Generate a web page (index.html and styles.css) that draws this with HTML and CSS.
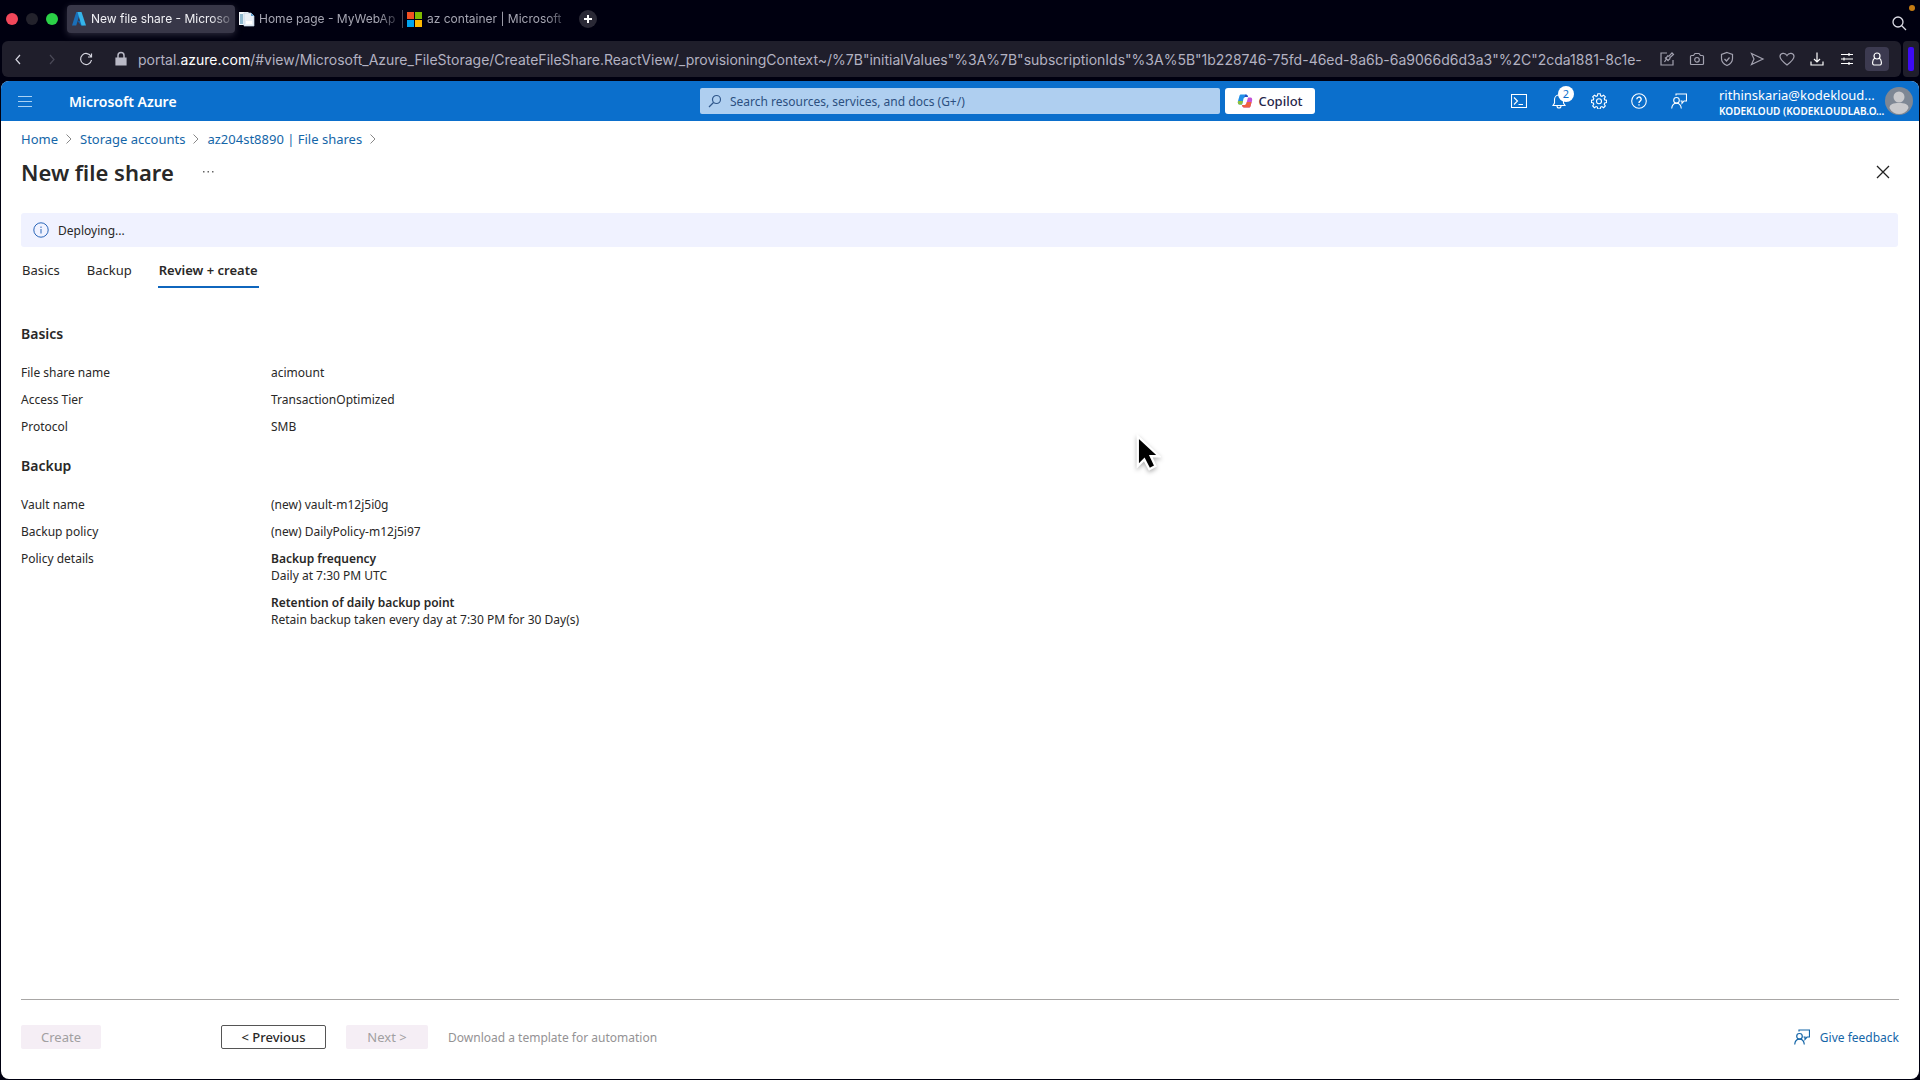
FILE: index.html
```html
<!DOCTYPE html>
<html lang="en">
<head>
  <meta charset="UTF-8" />
  <title>New file share - Microsoft Azure</title>
  <link rel="stylesheet" href="styles.css">
</head>
<body>
  <!-- browser chrome -->
  <div class="tab-strip">
    <div class="window-dots">
      <span class="dot dot-red"></span>
      <span class="dot dot-grey"></span>
      <span class="dot dot-green"></span>
    </div>
    <div class="tabs">
      <div class="tab active">
        <svg class="favicon" viewBox="0 0 16 16">
          <path d="M5.3 1h4.200L5.200 14.600H1z" fill="#1a6fb8"/>
          <path d="M6.300 9.800h5.200l1.400 4.800H10z" fill="#0f5ea8"/>
          <path d="M6.500 1h4l4.500 13.600h-4.500z" fill="#35b5ea"/>
        </svg>
        <span class="tab-title">New file share - Microso</span>
      </div>
      <div class="tab">
        <svg class="favicon" viewBox="0 0 16 16">
          <path d="M0 1h9l1 1v12H0z" fill="#f4f8fb"/>
          <path d="M1 3h3v10H1z" fill="#8fb9cf"/>
          <path d="M5 2h7l3 3v10H5z" fill="#e9eff6" stroke="#b9cfe2" stroke-width=".7"/>
          <path d="M12 2v3h3z" fill="#5e9fd0"/>
          <path d="M7 10h6v3H7z" fill="#fff"/>
        </svg>
        <span class="tab-title">Home page - MyWebAp</span>
      </div>
      <div class="tab divided">
        <svg class="favicon" viewBox="0 0 16 16">
          <path d="M0 1h7v7H0z" fill="#f25022"/>
          <path d="M8 1h7v7H8z" fill="#7fba00"/>
          <path d="M0 9h7v7H0z" fill="#00a4ef"/>
          <path d="M8 9h7v7H8z" fill="#ffb900"/>
        </svg>
        <span class="tab-title">az container | Microsoft</span>
      </div>
    </div>
    <button class="new-tab" aria-label="New tab">
      <svg width="18" height="18" viewBox="0 0 18 18"><path d="M9 5v8M5 9h8" stroke="#fff" stroke-width="2"/></svg>
    </button>
    <button class="tab-search" aria-label="Search tabs">
      <svg width="18" height="18" viewBox="0 0 18 18" fill="none" stroke="#dcdce6" stroke-width="1.3"><circle cx="8" cy="8" r="5"/><path d="M11.5 11.5l4.5 4.5"/></svg>
    </button>
    <span class="rec-dot"></span>
  </div>

  <div class="address-row">
    <div class="address-bar">
      <div class="nav-buttons">
        <button aria-label="Back"><svg class="ico" viewBox="0 0 16 16"><path d="M10 4L6 8.500l4 4.500"/></svg></button>
        <button aria-label="Forward" disabled><svg class="ico" viewBox="0 0 16 16"><path d="M6 4l4 4.500L6 13"/></svg></button>
        <button aria-label="Reload"><svg class="ico" viewBox="0 0 16 16"><path d="M13 5.500A5.500 5.500 0 1 0 13.500 9M13.500 2.500v3.500H10"/></svg></button>
        <svg class="ico lock" viewBox="0 0 16 16"><path d="M3 7h10v7H3z" fill="#b9b9c6"/><path d="M5 7V4.500a3 3 0 0 1 6 0V7" stroke-width="1.500"/></svg>
      </div>
      <div class="url">portal.<span class="url-host">azure.com</span>/#view/Microsoft_Azure_FileStorage/CreateFileShare.ReactView/_provisioningContext~/%7B"initialValues"%3A%7B"subscriptionIds"%3A%5B"1b228746-75fd-46ed-8a6b-6a9066d6d3a3"%2C"2cda1881-8c1e-</div>
      <div class="tools">
        <button aria-label="Edit"><svg class="ico" viewBox="0 0 16 16"><path d="M8 2H2v12h12V9M5.500 11l1.500-2.500M6 6.500l3.500 3.500M7 7.500l1.500-2.500L10 5.200 13 1.800 14.500 3.500 11 6.500l-.2 1.500L9 9.200"/></svg></button>
        <button aria-label="Snapshot"><svg class="ico" viewBox="0 0 16 16"><path d="M2.500 4.500h2l1.500-2h4l1.500 2h2q1 0 1 1v7q0 1-1 1h-11q-1 0-1-1v-7q0-1 1-1z"/><circle cx="8" cy="8.800" r="2.300"/></svg></button>
        <button aria-label="Privacy"><svg class="ico" viewBox="0 0 16 16"><path d="M8 1.500l5.500 2v4c0 3-2 5.500-5.500 7-3.500-1.500-5.500-4-5.500-7v-4zM5.500 8l2 2 3-3.500"/></svg></button>
        <button aria-label="My Flow"><svg class="ico" viewBox="0 0 16 16"><path d="M2.500 2.500L14 8 2.500 13.500 5 8z"/></svg></button>
        <button aria-label="Favourite"><svg class="ico" viewBox="0 0 16 16"><path d="M8 14C3.500 10.500 1 8.500 1 5.500 1 2 6 1 8 4.500 10 1 15 2 15 5.500c0 3-2.500 5-7 8.500z"/></svg></button>
        <button class="bright" aria-label="Downloads"><svg class="ico" viewBox="0 0 16 16"><path d="M8 1.500v9M5 8l3 3 3-3M2 10.500V14h12v-3.500"/></svg></button>
        <button class="bright" aria-label="Easy setup"><svg class="ico" viewBox="0 0 16 16"><path d="M2 3.500h12M2 8h12M2 12.500h12M10 2v3M5 6.500v3M10 11v3"/></svg></button>
        <button class="bright profile" aria-label="Profile"><svg class="ico" viewBox="0 0 16 16"><circle cx="8" cy="5" r="3"/><path d="M5.800 7C3 9 3 14 5 14h6c2 0 2-5-.8-7"/></svg></button>
      </div>
    </div>
    <div class="side-toggle"><span></span></div>
  </div>

  <!-- portal -->
  <div class="portal">
    <header class="topbar">
      <button class="menu-btn" aria-label="Show portal menu">
        <svg width="16" height="16" viewBox="0 0 16 16"><path d="M1 3.500h14M1 8.500h14M1 13.500h14" stroke="#a9d2f5"/></svg>
      </button>
      <a class="brand" href="#">Microsoft Azure</a>
      <div class="top-center">
        <label class="search">
          <svg width="14" height="14" viewBox="0 0 14 14" fill="none" stroke="#31588c" stroke-width="1.200"><circle cx="8.500" cy="5.500" r="4"/><path d="M5.500 8.500L1 13"/></svg>
          <input type="text" placeholder="Search resources, services, and docs (G+/)" aria-label="Search">
        </label>
        <button class="copilot">
          <svg width="16" height="16" viewBox="0 0 16 16">
            <path d="M4 1.500h5c1.500 0 1.500 1 2 2.500H8.500C6.500 4 6.500 6 6 8l-1 3.500H2.500C1 11.500.5 10 1 8l1.300-4.500C2.700 2 3 1.500 4 1.500z" fill="#2390e8"/>
            <path d="M1 8c-.5 2 0 3.500 1.500 3.500H5L6 8z" fill="#8fc13a"/>
            <path d="M8.500 1.500c1.500 0 2 1 2.500 2.500H8.500c-1 0-1.400.5-1.800 1.500z" fill="#264bc0"/>
            <path d="M12 14.500H7c-1.500 0-1.500-1-2-2.500h2.500c2 0 2-2 2.500-4l1-3.500h2.500c1.500 0 2 1.500 1.500 3.500l-1.300 4.500c-.4 1.500-.7 2-1.700 2z" fill="#c252d6"/>
            <path d="M14.500 9l-.8 3.500c-.4 1.500-.7 2-1.700 2H7c-1.500 0-1.500-1-2-2.500h2.500c1.500 0 2-1.500 2.300-3z" fill="#f0603e"/>
          </svg>
          Copilot
        </button>
      </div>
      <div class="top-icons">
        <button aria-label="Cloud Shell"><svg class="top-ico" viewBox="0 0 16 16"><path d="M.5 1.500h15v13H.5zM3 4.500L6.500 8 3 11.500M7.500 11.500H12"/></svg></button>
        <button class="bell" aria-label="Notifications"><svg class="top-ico" viewBox="0 0 16 16"><path d="M2 12.500h12l-1.500-2.500V6.500a4.500 4.500 0 0 0-9 0V10zM6 13a2 2 0 0 0 4 0"/></svg><span class="badge">2</span></button>
        <button aria-label="Settings"><svg class="top-ico" viewBox="0 0 16 16"><path d="M6.800 .8h2.400l.4 2 1.300.5 1.700-1.100 1.700 1.700-1.100 1.700.5 1.300 1.900.3v2.400l-1.900.4-.5 1.300 1.100 1.700-1.700 1.700-1.700-1.100-1.300.5-.4 1.900H6.800l-.4-1.900-1.300-.5-1.700 1.100-1.700-1.700 1.100-1.700-.5-1.300-1.900-.4V7.200l1.900-.3.5-1.300-1.100-1.700 1.700-1.700 1.700 1.100 1.300-.5z"/><circle cx="8" cy="8.300" r="2.500"/></svg></button>
        <button aria-label="Help"><svg class="top-ico" viewBox="0 0 16 16"><circle cx="8" cy="8" r="7.300"/><path d="M5.800 6.300a2.200 2.200 0 1 1 3.300 1.900C8.200 8.700 8 9 8 10M8 11.300v1.200" stroke-width="1.400"/></svg></button>
        <button aria-label="Feedback"><svg class="top-ico" viewBox="0 0 16 16"><circle cx="5.500" cy="7.300" r="2.800"/><path d="M.7 15.500c.3-3.500 2.300-5.300 4.800-5.300s4.500 1.800 4.800 5.300M5 2.500V1h10.500v7H13l-2 2.300V8H9.500"/></svg></button>
      </div>
      <div class="account">
        <div class="account-text">
          <div class="account-mail">rithinskaria@kodekloud...</div>
          <div class="account-dir">KODEKLOUD (KODEKLOUDLAB.O...</div>
        </div>
        <svg class="avatar" viewBox="0 0 28 28">
          <circle cx="14" cy="14" r="14" fill="#7e8794"/>
          <circle cx="14" cy="10" r="5.500" fill="#c9c9cc"/>
          <path d="M4.500 21c0-4 4-5 9.500-5s9.500 1 9.500 5c-2 4-5.500 6-9.500 6s-7.500-2-9.500-6z" fill="#c9c9cc"/>
        </svg>
      </div>
    </header>

    <main class="blade">
      <nav class="breadcrumb">
        <a href="#">Home</a>
        <svg viewBox="0 0 8 12"><path d="M1.500 1.500L6 6l-4.500 4.500"/></svg>
        <a href="#">Storage accounts</a>
        <svg viewBox="0 0 8 12"><path d="M1.500 1.500L6 6l-4.500 4.500"/></svg>
        <a href="#">az204st8890 | File shares</a>
        <svg viewBox="0 0 8 12"><path d="M1.500 1.500L6 6l-4.500 4.500"/></svg>
      </nav>
      <div class="title-row">
        <h1>New file share</h1>
        <button class="more" aria-label="More"><svg width="12" height="4" viewBox="0 0 12 4" fill="#666"><path d="M1 1h1.500v1.500H1zM5.500 1H7v1.500H5.500zM10 1h1.500v1.500H10z"/></svg></button>
        <button class="close" aria-label="Close"><svg width="14" height="14" viewBox="0 0 14 14"><path d="M1 1l12 12M13 1L1 13" stroke="#222" stroke-width="1.300"/></svg></button>
      </div>

      <div class="info-bar" role="status">
        <svg width="16" height="16" viewBox="0 0 16 16" fill="none" stroke="#2b66b8"><circle cx="8" cy="8" r="7.200"/><path d="M8 7v4.500M8 4.500V6"/></svg>
        Deploying...
      </div>

      <div class="pivot" role="tablist">
        <button role="tab">Basics</button>
        <button role="tab">Backup</button>
        <button role="tab" class="selected" aria-selected="true">Review + create</button>
      </div>

      <section>
        <h2>Basics</h2>
        <dl>
          <dt>File share name</dt><dd>acimount</dd>
          <dt>Access Tier</dt><dd>TransactionOptimized</dd>
          <dt>Protocol</dt><dd>SMB</dd>
        </dl>
      </section>
      <section>
        <h2>Backup</h2>
        <dl>
          <dt>Vault name</dt><dd>(new) vault-m12j5i0g</dd>
          <dt>Backup policy</dt><dd>(new) DailyPolicy-m12j5i97</dd>
          <dt>Policy details</dt>
          <dd>
            <p><strong>Backup frequency</strong><br>Daily at 7:30 PM UTC</p>
            <p><strong>Retention of daily backup point</strong><br>Retain backup taken every day at 7:30 PM for 30 Day(s)</p>
          </dd>
        </dl>
      </section>

      <footer class="actions">
        <button class="btn btn-create" disabled>Create</button>
        <button class="btn btn-prev">&lt; Previous</button>
        <button class="btn btn-next" disabled>Next &gt;</button>
        <span class="template-link">Download a template for automation</span>
        <a class="feedback" href="#">
          <svg width="16" height="16" viewBox="0 0 16 16"><circle cx="5.500" cy="7.300" r="2.800"/><path d="M.7 15.500c.3-3.500 2.300-5.300 4.800-5.300s4.500 1.800 4.800 5.300M5 2.500V1h10.500v7H13l-2 2.300V8H9.500"/></svg>
          Give feedback
        </a>
      </footer>
    </main>
  </div>

  <svg class="cursor" viewBox="0 0 28 40">
    <path d="M3 2v32l7-7 5.500 10.500 6.500-3.500L17 23.500h9z" fill="#000" stroke="#fff" stroke-width="2.500"/>
  </svg>
</body>
</html>
```
FILE: styles.css
```css
* { box-sizing: border-box; }
body {
  margin: 0;
  height: 100vh;
  display: flex;
  flex-direction: column;
  background: #000010;
  font-family: "Noto Sans", sans-serif;
  font-size: 12px;
  color: #292827;
  overflow: hidden;
}
button {
  font: inherit;
  color: inherit;
  background: none;
  border: none;
  padding: 0;
  display: flex;
  align-items: center;
  justify-content: center;
}
a { color: #1566a8; text-decoration: none; }
h1, h2, p, dl, dd { margin: 0; }

/* tab strip */
.tab-strip {
  position: relative;
  display: flex;
  align-items: center;
  height: 41px;
  padding: 0 12px 4px 6px;
  font-family: Inter, sans-serif;
  color: #a5a5b2;
}
.window-dots { display: flex; gap: 8px; width: 61px; }
.dot { width: 12px; height: 12px; border-radius: 50%; }
.dot-red { background: #f2475a; }
.dot-grey { background: #23222c; }
.dot-green { background: #2bd147; }
.tabs { display: flex; }
.tab {
  display: flex;
  align-items: center;
  gap: 4px;
  width: 168px;
  height: 28px;
  padding: 0 2px 0 4px;
  border-radius: 4px;
}
.tab.active {
  background: #383748;
  color: #f1f1f5;
  box-shadow: 0 2px 6px #2a293a;
}
.tab.divided { position: relative; }
.tab.divided::before {
  content: "";
  position: absolute;
  left: -1px;
  top: 5px;
  width: 1px;
  height: 18px;
  background: #4a4957;
}
.favicon { width: 16px; height: 16px; flex: none; }
.tab-title {
  flex: 1;
  white-space: nowrap;
  -webkit-mask-image: linear-gradient(90deg, #000 84%, transparent 102%);
  mask-image: linear-gradient(90deg, #000 84%, transparent 102%);
}
.new-tab {
  width: 18px;
  height: 18px;
  margin-left: 8px;
  border-radius: 50%;
  background: #2a2936;
}
.tab-search { margin-left: auto; padding-top: 8px; }
.rec-dot {
  position: absolute;
  top: 5px;
  right: 5px;
  width: 6px;
  height: 6px;
  border-radius: 50%;
  background: #c47c14;
}

/* address bar */
.address-row { display: flex; gap: 2px; padding: 0 1px 0 2px; height: 36px; }
.address-bar {
  flex: 1;
  min-width: 0;
  display: flex;
  align-items: center;
  padding: 0 12px 0 6px;
  border-radius: 6px;
  background: #1f1e2b;
  color: #d5d5df;
}
.nav-buttons { display: flex; align-items: center; gap: 14px; width: 130px; }
.nav-buttons button { width: 20px; height: 20px; }
.nav-buttons button:disabled { color: #4a4957; }
.ico {
  width: 16px;
  height: 16px;
  fill: none;
  stroke: currentColor;
  stroke-width: 1.2;
}
.lock { color: #b9b9c6; margin-left: 3px; }
.url {
  flex: 1;
  overflow: hidden;
  white-space: nowrap;
  font: 14px Inter, sans-serif;
  color: #b3b2c2;
}
.url-host { color: #fff; }
.tools { display: flex; align-items: center; gap: 6px; color: #a3a2b0; }
.tools button { width: 24px; height: 24px; }
.tools .bright { color: #fff; }
.tools .profile { background: #3c3a50; border-radius: 4px; }
.side-toggle {
  width: 16px;
  padding: 6px 5px;
  border-radius: 4px;
  background: #1f1e2b;
}
.side-toggle span { display: block; height: 24px; width: 6px; border-radius: 2px; background: #3d0bf5; }

/* portal */
.portal {
  flex: 1;
  min-height: 0;
  display: flex;
  flex-direction: column;
  margin: 4px 1px 1px;
  border-radius: 8px;
  background: #fff;
  overflow: hidden;
}
.topbar {
  display: flex;
  align-items: center;
  height: 40px;
  padding: 0 6px 0 16px;
  background: #0b6fcc;
  color: #fff;
}
.brand { margin-left: 36px; width: 631px; font-size: 14px; font-weight: 600; color: #fff; }
.top-center { flex: 1; display: flex; gap: 5px; }
.search {
  display: flex;
  align-items: center;
  gap: 8px;
  width: 520px;
  height: 26px;
  padding: 0 8px;
  border-radius: 2px;
  background: #afcff0;
}
.search input {
  flex: 1;
  border: none;
  outline: none;
  background: none;
  padding: 0;
  font: inherit;
}
.search input::placeholder { color: #2c4f80; }
.copilot {
  gap: 5px;
  width: 90px;
  height: 26px;
  border-radius: 3px;
  background: #fff;
  color: #26264a;
  font-size: 13px;
  font-weight: 500;
}
.top-icons { display: flex; }
.top-icons button { width: 40px; height: 40px; }
.top-ico { width: 16px; height: 16px; fill: none; stroke: #fff; stroke-width: 1.1; }
.bell { position: relative; }
.badge {
  position: absolute;
  top: 5px;
  left: 19px;
  width: 16px;
  height: 16px;
  border-radius: 50%;
  background: #fff;
  color: #0b6fcc;
  font-size: 11px;
  line-height: 16px;
}
.account { display: flex; align-items: center; gap: 4px; margin-left: 20px; }
.account-text { width: 162px; padding-top: 3px; white-space: nowrap; }
.account-mail { font-size: 13px; line-height: 16px; }
.account-dir { font-size: 10px; font-weight: 600; line-height: 16px; }
.avatar { width: 28px; height: 28px; }

.blade {
  flex: 1;
  display: flex;
  flex-direction: column;
  padding: 9px 20px 30px;
}
.breadcrumb { display: flex; align-items: center; gap: 7px; font-size: 13px; line-height: 18px; }
.breadcrumb svg { width: 8px; height: 12px; fill: none; stroke: #888; }
.title-row { display: flex; align-items: center; height: 48px; }
h1 { font-size: 22px; font-weight: 600; line-height: 32px; }
.more { margin-left: 28px; }
.close { margin-left: auto; margin-right: 9px; }
.info-bar {
  display: flex;
  align-items: center;
  gap: 9px;
  height: 34px;
  margin: 17px 1px 0 0;
  padding: 0 12px;
  border-radius: 3px;
  background: #f0f2ff;
}
.pivot { display: flex; gap: 25px; margin-top: 7px; font-size: 13px; }
.pivot button { height: 34px; padding: 0 1px; border-bottom: 2px solid transparent; }
.pivot .selected { border-color: #0f66bd; font-weight: 600; }

h2 { font-size: 14px; font-weight: 600; line-height: 20px; }
section { margin-top: 21px; }
.pivot + section { margin-top: 36px; }
dl {
  display: grid;
  grid-template-columns: 250px 1fr;
  row-gap: 10px;
  margin-top: 20px;
  line-height: 17px;
}
dd p + p { margin-top: 10px; }
strong { font-weight: 600; }

.actions {
  display: flex;
  align-items: center;
  margin-top: auto;
  padding-top: 25px;
  border-top: 1px solid #a8a6a5;
}
.btn { height: 24px; border-radius: 2px; font-size: 13px; }
.btn:disabled { background: #f5eef5; color: #a19fa1; }
.btn-create { width: 80px; }
.btn-prev { width: 105px; margin-left: 120px; border: 1px solid #555; font-weight: 500; }
.btn-next { width: 82px; margin-left: 20px; }
.template-link { margin-left: 20px; font-size: 12px; color: #949294; }
.feedback {
  display: flex;
  align-items: center;
  gap: 10px;
  margin-left: auto;
}
.feedback svg { fill: none; stroke: currentColor; stroke-width: 1.2; }

.cursor {
  position: absolute;
  left: 1135px;
  top: 434px;
  width: 26px;
  height: 38px;
  filter: drop-shadow(0 2px 2px rgba(0, 0, 0, 0.3));
}
```
